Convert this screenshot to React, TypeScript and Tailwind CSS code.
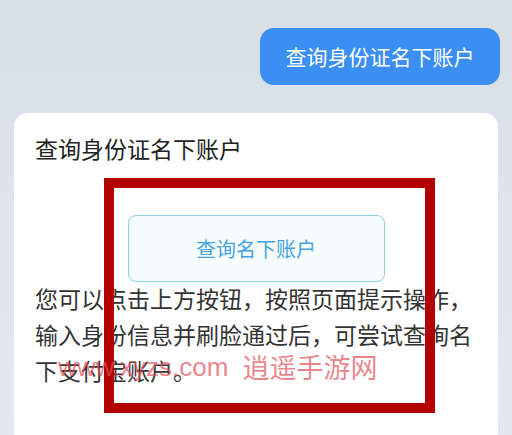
export default function App() {
  return (
    <div
      className="relative w-[512px] h-[435px] overflow-hidden bg-gradient-to-b from-[#d9dfe6] via-[#dee4eb] to-[#e3e9f0]"
      style={{ fontFamily: '"Noto Sans CJK SC", "Noto Sans", sans-serif' }}
    >
      {/* chat bubble */}
      <div className="flex justify-end pt-[28px] pr-[12px]">
        <div className="h-[57px] w-[240px] rounded-[14px] bg-[#3b8ef2] flex items-center justify-center text-white text-[21px] leading-none">
          查询身份证名下账户
        </div>
      </div>

      {/* card */}
      <div className="mx-[14px] mt-[28px] h-[400px] rounded-t-[14px] bg-white px-[21px] pt-[19px]">
        <h2 className="text-[23px] leading-[32px] text-[#222]">
          查询身份证名下账户
        </h2>

        <div className="flex justify-center mt-[51px]">
          <button className="h-[67px] w-[257px] rounded-[8px] border border-[#8fd0dc] bg-[#f7fdff] text-[20px] text-[#45a4df]">
            查询名下账户
          </button>
        </div>

        <p className="text-[23px] leading-[36px] text-[#333] -mt-[2px]">
          您可以点击上方按钮，按照页面提示操作，输入身份信息并刷脸通过后，可尝试查询名下支付宝账户。
        </p>
      </div>

      {/* red annotation box */}
      <div className="absolute left-[104px] top-[178px] w-[331px] h-[235px] border-[10px] border-[#b30000]" />

      {/* watermark */}
      <div
        className="absolute left-[58px] top-[353px] flex items-center gap-[14px] text-[#e0505a]/70 leading-none whitespace-nowrap"
      >
        <span className="text-[26px]" style={{ fontFamily: '"Liberation Sans", Arial, sans-serif' }}>
          www.xyzs.com
        </span>
        <span className="text-[27px]">逍遥手游网</span>
      </div>
    </div>
  );
}
